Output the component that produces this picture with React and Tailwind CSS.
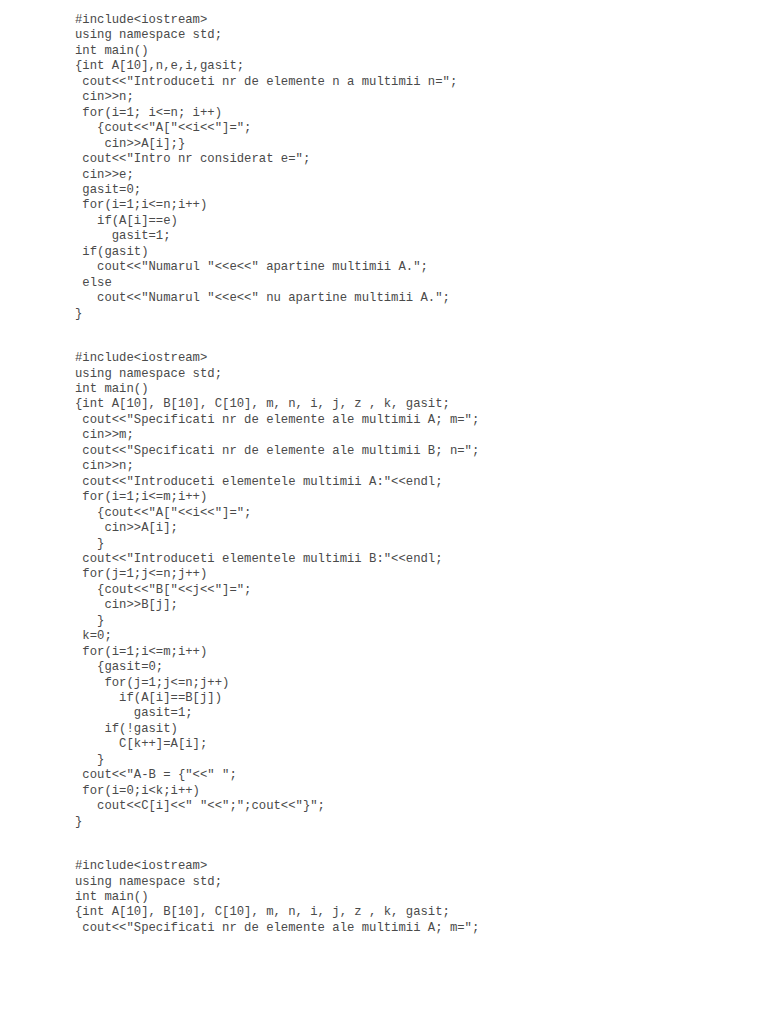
const block1 = `#include<iostream>
using namespace std;
int main()
{int A[10],n,e,i,gasit;
 cout<<"Introduceti nr de elemente n a multimii n=";
 cin>>n;
 for(i=1; i<=n; i++)
   {cout<<"A["<<i<<"]=";
    cin>>A[i];}
 cout<<"Intro nr considerat e=";
 cin>>e;
 gasit=0;
 for(i=1;i<=n;i++)
   if(A[i]==e)
     gasit=1;
 if(gasit)
   cout<<"Numarul "<<e<<" apartine multimii A.";
 else
   cout<<"Numarul "<<e<<" nu apartine multimii A.";
}`;

const block2 = `#include<iostream>
using namespace std;
int main()
{int A[10], B[10], C[10], m, n, i, j, z , k, gasit;
 cout<<"Specificati nr de elemente ale multimii A; m=";
 cin>>m;
 cout<<"Specificati nr de elemente ale multimii B; n=";
 cin>>n;
 cout<<"Introduceti elementele multimii A:"<<endl;
 for(i=1;i<=m;i++)
   {cout<<"A["<<i<<"]=";
    cin>>A[i];
   }
 cout<<"Introduceti elementele multimii B:"<<endl;
 for(j=1;j<=n;j++)
   {cout<<"B["<<j<<"]=";
    cin>>B[j];
   }
 k=0;
 for(i=1;i<=m;i++)
   {gasit=0;
    for(j=1;j<=n;j++)
      if(A[i]==B[j])
        gasit=1;
    if(!gasit)
      C[k++]=A[i];
   }
 cout<<"A-B = {"<<" ";
 for(i=0;i<k;i++)
   cout<<C[i]<<" "<<";";cout<<"}";
}`;

const block3 = `#include<iostream>
using namespace std;
int main()
{int A[10], B[10], C[10], m, n, i, j, z , k, gasit;
 cout<<"Specificati nr de elemente ale multimii A; m=";`;

export default function App() {
  return (
    <div className="w-[768px] h-[1024px] bg-white overflow-hidden pl-[75px] pt-[13px]">
      <div className="flex flex-col gap-[29px] text-[12.25px] leading-[15.45px] text-[#4a4a4a] font-['Liberation_Mono','Courier_New',monospace]">
        <pre className="m-0 font-[inherit] whitespace-pre">{block1}</pre>
        <pre className="m-0 font-[inherit] whitespace-pre">{block2}</pre>
        <pre className="m-0 font-[inherit] whitespace-pre">{block3}</pre>
      </div>
    </div>
  );
}
